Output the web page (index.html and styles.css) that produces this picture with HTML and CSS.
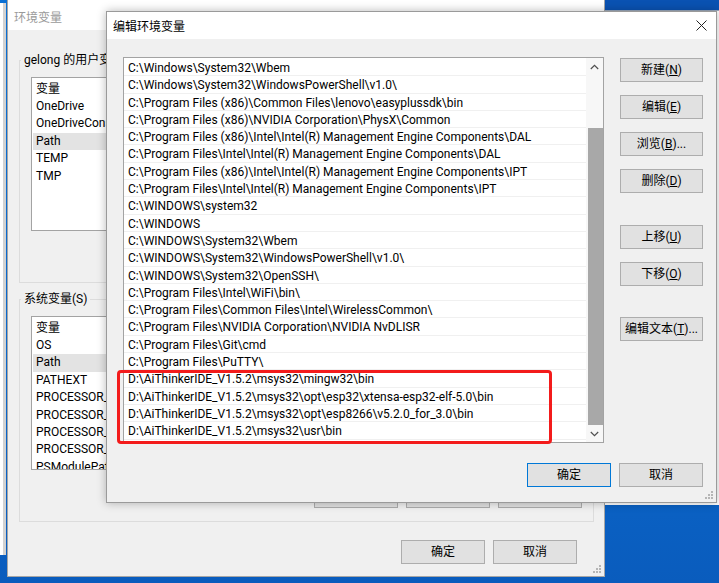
FILE: index.html
```html
<!DOCTYPE html>
<html lang="zh-CN">
<head>
<meta charset="utf-8">
<title>编辑环境变量</title>
<link rel="stylesheet" href="styles.css">
</head>
<body>
<div class="win win-left"></div>
<div class="win win-right"><div class="wr-title"></div></div>

<div class="win dlg-env">
  <div class="env-title">环境变量</div>
  <div class="env-body">
    <fieldset class="grp">
      <legend class="grp-label">gelong 的用户变量(U)</legend>
      <div class="grp-inner">
        <div class="vlist">
          <div class="vrow vhead"><span class="c1">变量</span></div>
          <div class="vrow"><span class="c1">OneDrive</span></div>
          <div class="vrow"><span class="c1">OneDriveConsumer</span></div>
          <div class="vrow sel"><span class="c1">Path</span></div>
          <div class="vrow"><span class="c1">TEMP</span></div>
          <div class="vrow"><span class="c1">TMP</span></div>
        </div>
        <div class="grp-btns">
          <div class="btn"></div>
          <div class="btn"></div>
          <div class="btn"></div>
        </div>
      </div>
    </fieldset>
    <fieldset class="grp grp-sys">
      <legend class="grp-label">系统变量(S)</legend>
      <div class="grp-inner">
        <div class="vlist">
          <div class="vrow vhead"><span class="c1">变量</span></div>
          <div class="vrow"><span class="c1">OS</span></div>
          <div class="vrow sel"><span class="c1">Path</span></div>
          <div class="vrow"><span class="c1">PATHEXT</span></div>
          <div class="vrow"><span class="c1">PROCESSOR_ARCHITECTURE</span></div>
          <div class="vrow"><span class="c1">PROCESSOR_IDENTIFIER</span></div>
          <div class="vrow"><span class="c1">PROCESSOR_LEVEL</span></div>
          <div class="vrow"><span class="c1">PROCESSOR_REVISION</span></div>
          <div class="vrow"><span class="c1">PSModulePath</span></div>
        </div>
        <div class="grp-btns">
          <div class="btn"></div>
          <div class="btn"></div>
          <div class="btn"></div>
        </div>
      </div>
    </fieldset>
    <div class="env-foot">
      <div class="btn">确定</div>
      <div class="btn">取消</div>
    </div>
  </div>
  <svg class="grip" width="8" height="8" viewBox="0 0 8 8"><g fill="#b5b5b5"><rect x="6" y="0" width="2" height="2"/><rect x="3" y="3" width="2" height="2"/><rect x="6" y="3" width="2" height="2"/><rect x="0" y="6" width="2" height="2"/><rect x="3" y="6" width="2" height="2"/><rect x="6" y="6" width="2" height="2"/></g></svg>
</div>

<div class="win dlg-edit">
  <div class="ed-title">
    <span>编辑环境变量</span>
    <svg class="ed-close" width="11" height="11" viewBox="0 0 11 11"><path d="M0.5 0.5 L10.5 10.5 M10.5 0.5 L0.5 10.5" stroke="#222" stroke-width="1" fill="none"/></svg>
  </div>
  <div class="ed-body">
    <div class="ed-main">
      <div class="plist">
        <div class="prows">
          <div class="prow">C:\Windows\System32\Wbem</div>
          <div class="prow">C:\Windows\System32\WindowsPowerShell\v1.0\</div>
          <div class="prow">C:\Program Files (x86)\Common Files\lenovo\easyplussdk\bin</div>
          <div class="prow">C:\Program Files (x86)\NVIDIA Corporation\PhysX\Common</div>
          <div class="prow">C:\Program Files (x86)\Intel\Intel(R) Management Engine Components\DAL</div>
          <div class="prow">C:\Program Files\Intel\Intel(R) Management Engine Components\DAL</div>
          <div class="prow">C:\Program Files (x86)\Intel\Intel(R) Management Engine Components\IPT</div>
          <div class="prow">C:\Program Files\Intel\Intel(R) Management Engine Components\IPT</div>
          <div class="prow">C:\WINDOWS\system32</div>
          <div class="prow">C:\WINDOWS</div>
          <div class="prow">C:\WINDOWS\System32\Wbem</div>
          <div class="prow">C:\WINDOWS\System32\WindowsPowerShell\v1.0\</div>
          <div class="prow">C:\WINDOWS\System32\OpenSSH\</div>
          <div class="prow">C:\Program Files\Intel\WiFi\bin\</div>
          <div class="prow">C:\Program Files\Common Files\Intel\WirelessCommon\</div>
          <div class="prow">C:\Program Files\NVIDIA Corporation\NVIDIA NvDLISR</div>
          <div class="prow">C:\Program Files\Git\cmd</div>
          <div class="prow">C:\Program Files\PuTTY\</div>
          <div class="prow">D:\AiThinkerIDE_V1.5.2\msys32\mingw32\bin</div>
          <div class="prow">D:\AiThinkerIDE_V1.5.2\msys32\opt\esp32\xtensa-esp32-elf-5.0\bin</div>
          <div class="prow">D:\AiThinkerIDE_V1.5.2\msys32\opt\esp8266\v5.2.0_for_3.0\bin</div>
          <div class="prow">D:\AiThinkerIDE_V1.5.2\msys32\usr\bin</div>
        </div>
        <div class="sb">
          <div class="sb-arrow"><svg width="9" height="6" viewBox="0 0 9 6"><path d="M0.8 5 L4.5 1.3 L8.2 5" stroke="#505050" stroke-width="1.2" fill="none"/></svg></div>
          <div class="sb-track"><div class="sb-thumb"></div></div>
          <div class="sb-arrow"><svg width="9" height="6" viewBox="0 0 9 6"><path d="M0.8 1 L4.5 4.7 L8.2 1" stroke="#505050" stroke-width="1.2" fill="none"/></svg></div>
        </div>
      </div>
      <div class="ed-btns">
        <div class="btn">新建(<u>N</u>)</div>
        <div class="btn">编辑(<u>E</u>)</div>
        <div class="btn">浏览(<u>B</u>)...</div>
        <div class="btn">删除(<u>D</u>)</div>
        <div class="btn gap-a">上移(<u>U</u>)</div>
        <div class="btn">下移(<u>O</u>)</div>
        <div class="btn gap-b">编辑文本(<u>T</u>)...</div>
      </div>
    </div>
    <div class="ed-foot">
      <div class="btn primary">确定</div>
      <div class="btn">取消</div>
    </div>
  </div>
  <div class="mark"></div>
  <svg class="grip" width="8" height="8" viewBox="0 0 8 8"><g fill="#b5b5b5"><rect x="6" y="0" width="2" height="2"/><rect x="3" y="3" width="2" height="2"/><rect x="6" y="3" width="2" height="2"/><rect x="0" y="6" width="2" height="2"/><rect x="3" y="6" width="2" height="2"/><rect x="6" y="6" width="2" height="2"/></g></svg>
</div>
</body>
</html>
```

FILE: styles.css
```css
html, body {
  margin: 0;
  padding: 0;
}

body {
  width: 719px;
  height: 583px;
  overflow: hidden;
  position: relative;
  background: linear-gradient(180deg, #0b70d4 0%, #0a66ca 70%, #0a5cbd 100%);
  font-family: Roboto, "Noto Sans CJK SC", sans-serif;
  font-size: 12px;
  color: #000;
}

u {
  text-decoration: underline;
  text-underline-offset: 1px;
}

.win {
  position: absolute;
  box-sizing: border-box;
}

/* window peeking out on the far left */
.win-left {
  left: -200px;
  top: 3px;
  width: 206px;
  height: 552px;
  background: #fff;
  border-right: 3px solid #d2d2d2;
}

/* window peeking out on the right */
.win-right {
  left: 600px;
  top: -20px;
  width: 200px;
  height: 525px;
  background: #fff;
}

.wr-title {
  height: 30px;
  background: #0a52b2;
  border-bottom: 1px solid #9aa8bc;
}

/* ---------- background dialog: 环境变量 ---------- */
.dlg-env {
  left: 7px;
  top: -1px;
  width: 598px;
  height: 578px;
  background: #f0f0f0;
  border: 1px solid #a6a6a6;
}

.env-title {
  height: 30px;
  box-sizing: border-box;
  padding: 2px 0 0 6px;
  display: flex;
  align-items: center;
  background: #fff;
  color: #9a9a9a;
}

.env-body {
  padding: 22px 10px 12px 11px;
}

.grp {
  margin: 0;
  padding: 0;
  min-width: 0;
  border: 1px solid #dcdcdc;
}

.grp-sys {
  margin-top: 8px;
}

.grp-label {
  margin-left: 1px;
  padding: 0 3px;
  line-height: 16px;
}

.grp-inner {
  padding: 9px 11px 13px 11px;
}

.vlist {
  height: 154px;
  box-sizing: border-box;
  border: 1px solid #a3a3a3;
  background: #fff;
  overflow: hidden;
  padding-top: 2px;
}

.vrow {
  display: flex;
  height: 17.4px;
  line-height: 17.4px;
  margin: 0 1px;
  white-space: nowrap;
}

.vrow.vhead {
  height: 18px;
  line-height: 18px;
}

.vrow.sel {
  background: #e3e3e3;
}

.c1 {
  flex: none;
  width: 73px;
  overflow: hidden;
  padding-left: 3px;
}

.grp-btns {
  display: flex;
  justify-content: flex-end;
  gap: 8px;
  margin-top: 14px;
}

.btn {
  width: 84px;
  height: 24px;
  box-sizing: border-box;
  border: 1px solid #adadad;
  background: #e1e1e1;
  display: flex;
  align-items: center;
  justify-content: center;
  white-space: nowrap;
  line-height: 16px;
}

.env-foot {
  display: flex;
  justify-content: flex-end;
  gap: 8px;
  margin-top: 18px;
  padding-right: 17px;
}

.grip {
  position: absolute;
  right: 3px;
  bottom: 3px;
}

/* ---------- front dialog: 编辑环境变量 ---------- */
.dlg-edit {
  left: 106px;
  top: 11px;
  width: 611px;
  height: 492px;
  background: #f0f0f0;
  border: 1px solid #9a9a9a;
  box-shadow: 0 0 9px rgba(0, 0, 0, 0.28);
}

.ed-title {
  height: 27px;
  box-sizing: border-box;
  padding-left: 6px;
  display: flex;
  align-items: center;
  background: #fff;
}

.ed-close {
  margin-left: auto;
  margin-right: 9px;
}

.ed-body {
  padding: 18px 13px 15px 16px;
}

.ed-main {
  display: flex;
  gap: 16px;
}

.plist {
  width: 481px;
  height: 386px;
  box-sizing: border-box;
  border: 1px solid #a3a3a3;
  background: #fff;
  display: flex;
}

.prows {
  flex: 1;
  min-width: 0;
  overflow: hidden;
  padding-top: 1px;
}

.prow {
  height: 17.3px;
  line-height: 18px;
  box-sizing: border-box;
  border-bottom: 1px solid #f0f0f0;
  padding-left: 4px;
  white-space: nowrap;
}

.sb {
  width: 17px;
  flex: none;
  display: flex;
  flex-direction: column;
  background: #f7f7f7;
}

.sb-arrow {
  height: 17px;
  display: flex;
  align-items: center;
  justify-content: center;
}

.sb-track {
  flex: 1;
  display: flex;
  flex-direction: column;
}

.sb-thumb {
  margin: 53px 0 0 2px;
  height: 297px;
  background: #a8a8a8;
}

.ed-btns {
  display: flex;
  flex-direction: column;
  width: 83px;
  gap: 13px;
  padding-top: 1px;
}

.ed-btns .btn {
  width: 83px;
}

.ed-btns .gap-a {
  margin-top: 19px;
}

.ed-btns .gap-b {
  margin-top: 18px;
}

.ed-foot {
  display: flex;
  justify-content: flex-end;
  gap: 8px;
  margin-top: 20px;
}

.btn.primary {
  border-color: #0078d7;
}

/* red annotation frame drawn over the list */
.mark {
  position: absolute;
  left: 10px;
  top: 358px;
  width: 435px;
  height: 74px;
  box-sizing: border-box;
  border: 3px solid #f31b1b;
  border-radius: 4px;
}
```
